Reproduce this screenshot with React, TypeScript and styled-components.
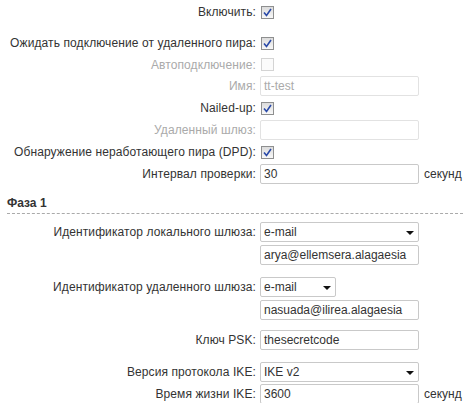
import React from "react";
import styled, { createGlobalStyle } from "styled-components";

const Global = createGlobalStyle`
  html, body { margin: 0; padding: 0; background: #fff; }
  body { font-family: "Liberation Sans", Arial, sans-serif; font-size: 12px; color: #333; }
`;

const Page = styled.div`
  width: 463px;
  height: 403px;
  overflow: hidden;
  padding-top: 1px;
  box-sizing: border-box;
`;

const Row = styled.div<{ $h?: number; $mt?: number }>`
  display: flex;
  align-items: center;
  height: ${(p) => p.$h ?? 22}px;
  margin-top: ${(p) => p.$mt ?? 0}px;
`;

const Label = styled.div<{ $disabled?: boolean }>`
  width: 260px;
  flex: none;
  text-align: right;
  white-space: nowrap;
  letter-spacing: 0.1px;
  color: ${(p) => (p.$disabled ? "#aaa" : "#333")};
  padding-right: 4px;
  box-sizing: border-box;
`;

const Box = styled.span<{ $disabled?: boolean }>`
  margin-left: 1px;
  width: 13px;
  height: 13px;
  box-sizing: border-box;
  border: 1px solid ${(p) => (p.$disabled ? "#d4d4d4" : "#8e8f8f")};
  background: ${(p) => (p.$disabled ? "#fbfbfb" : "linear-gradient(#dcdcdc, #f8f8f8)")};
  display: flex;
  align-items: center;
  justify-content: center;
`;

const Field = styled.div<{ $w?: number; $disabled?: boolean }>`
  width: ${(p) => p.$w ?? 159}px;
  height: 20px;
  box-sizing: border-box;
  border: 1px solid ${(p) => (p.$disabled ? "#e2e2e2" : "#c9c9c9")};
  border-radius: 2px;
  padding-left: 3px;
  display: flex;
  align-items: center;
  color: ${(p) => (p.$disabled ? "#aaa" : "#333")};
  background: #fff;
  position: relative;
`;

const Arrow = styled.span`
  position: absolute;
  right: 4px;
  top: 8px;
  width: 0;
  height: 0;
  border-left: 4px solid transparent;
  border-right: 4px solid transparent;
  border-top: 4px solid #111;
`;

const Unit = styled.span`
  margin-left: 5px;
`;

const Heading = styled.div`
  margin: 11px 0 0 7px;
  padding-bottom: 3px;
  font-weight: bold;
  line-height: 14px;
  border-bottom: 1px dashed #aaa;
`;

const Check = ({ disabled, checked = true }: { disabled?: boolean; checked?: boolean }) => (
  <Box $disabled={disabled}>
    {checked && !disabled && (
      <svg width="9" height="9" viewBox="0 0 9 9">
        <path d="M1 4.5 L3.5 7.5 L8 1" fill="none" stroke="#2a4aa8" strokeWidth="1.6" />
      </svg>
    )}
  </Box>
);

export default function App() {
  return (
    <Page>
      <Global />
      <Row>
        <Label>Включить:</Label>
        <Check />
      </Row>
      <Row $mt={9}>
        <Label>Ожидать подключение от удаленного пира:</Label>
        <Check />
      </Row>
      <Row $h={21}>
        <Label $disabled>Автоподключение:</Label>
        <Check disabled checked={false} />
      </Row>
      <Row>
        <Label $disabled>Имя:</Label>
        <Field $disabled>tt-test</Field>
      </Row>
      <Row>
        <Label>Nailed-up:</Label>
        <Check />
      </Row>
      <Row>
        <Label $disabled>Удаленный шлюз:</Label>
        <Field $disabled />
      </Row>
      <Row>
        <Label>Обнаружение неработающего пира (DPD):</Label>
        <Check />
      </Row>
      <Row>
        <Label>Интервал проверки:</Label>
        <Field>30</Field>
        <Unit>секунд</Unit>
      </Row>
      <Heading>Фаза 1</Heading>
      <Row $h={20} $mt={8}>
        <Label>Идентификатор локального шлюза:</Label>
        <Field>
          e-mail
          <Arrow />
        </Field>
      </Row>
      <Row $h={20} $mt={3}>
        <Label />
        <Field>arya@ellemsera.alagaesia</Field>
      </Row>
      <Row $h={20} $mt={12}>
        <Label>Идентификатор удаленного шлюза:</Label>
        <Field $w={76}>
          e-mail
          <Arrow />
        </Field>
      </Row>
      <Row $h={20} $mt={3}>
        <Label />
        <Field>nasuada@ilirea.alagaesia</Field>
      </Row>
      <Row $h={20} $mt={10}>
        <Label>Ключ PSK:</Label>
        <Field>thesecretcode</Field>
      </Row>
      <Row $h={20} $mt={12}>
        <Label>Версия протокола IKE:</Label>
        <Field>
          IKE v2
          <Arrow />
        </Field>
      </Row>
      <Row $h={20} $mt={2}>
        <Label>Время жизни IKE:</Label>
        <Field>3600</Field>
        <Unit>секунд</Unit>
      </Row>
    </Page>
  );
}
